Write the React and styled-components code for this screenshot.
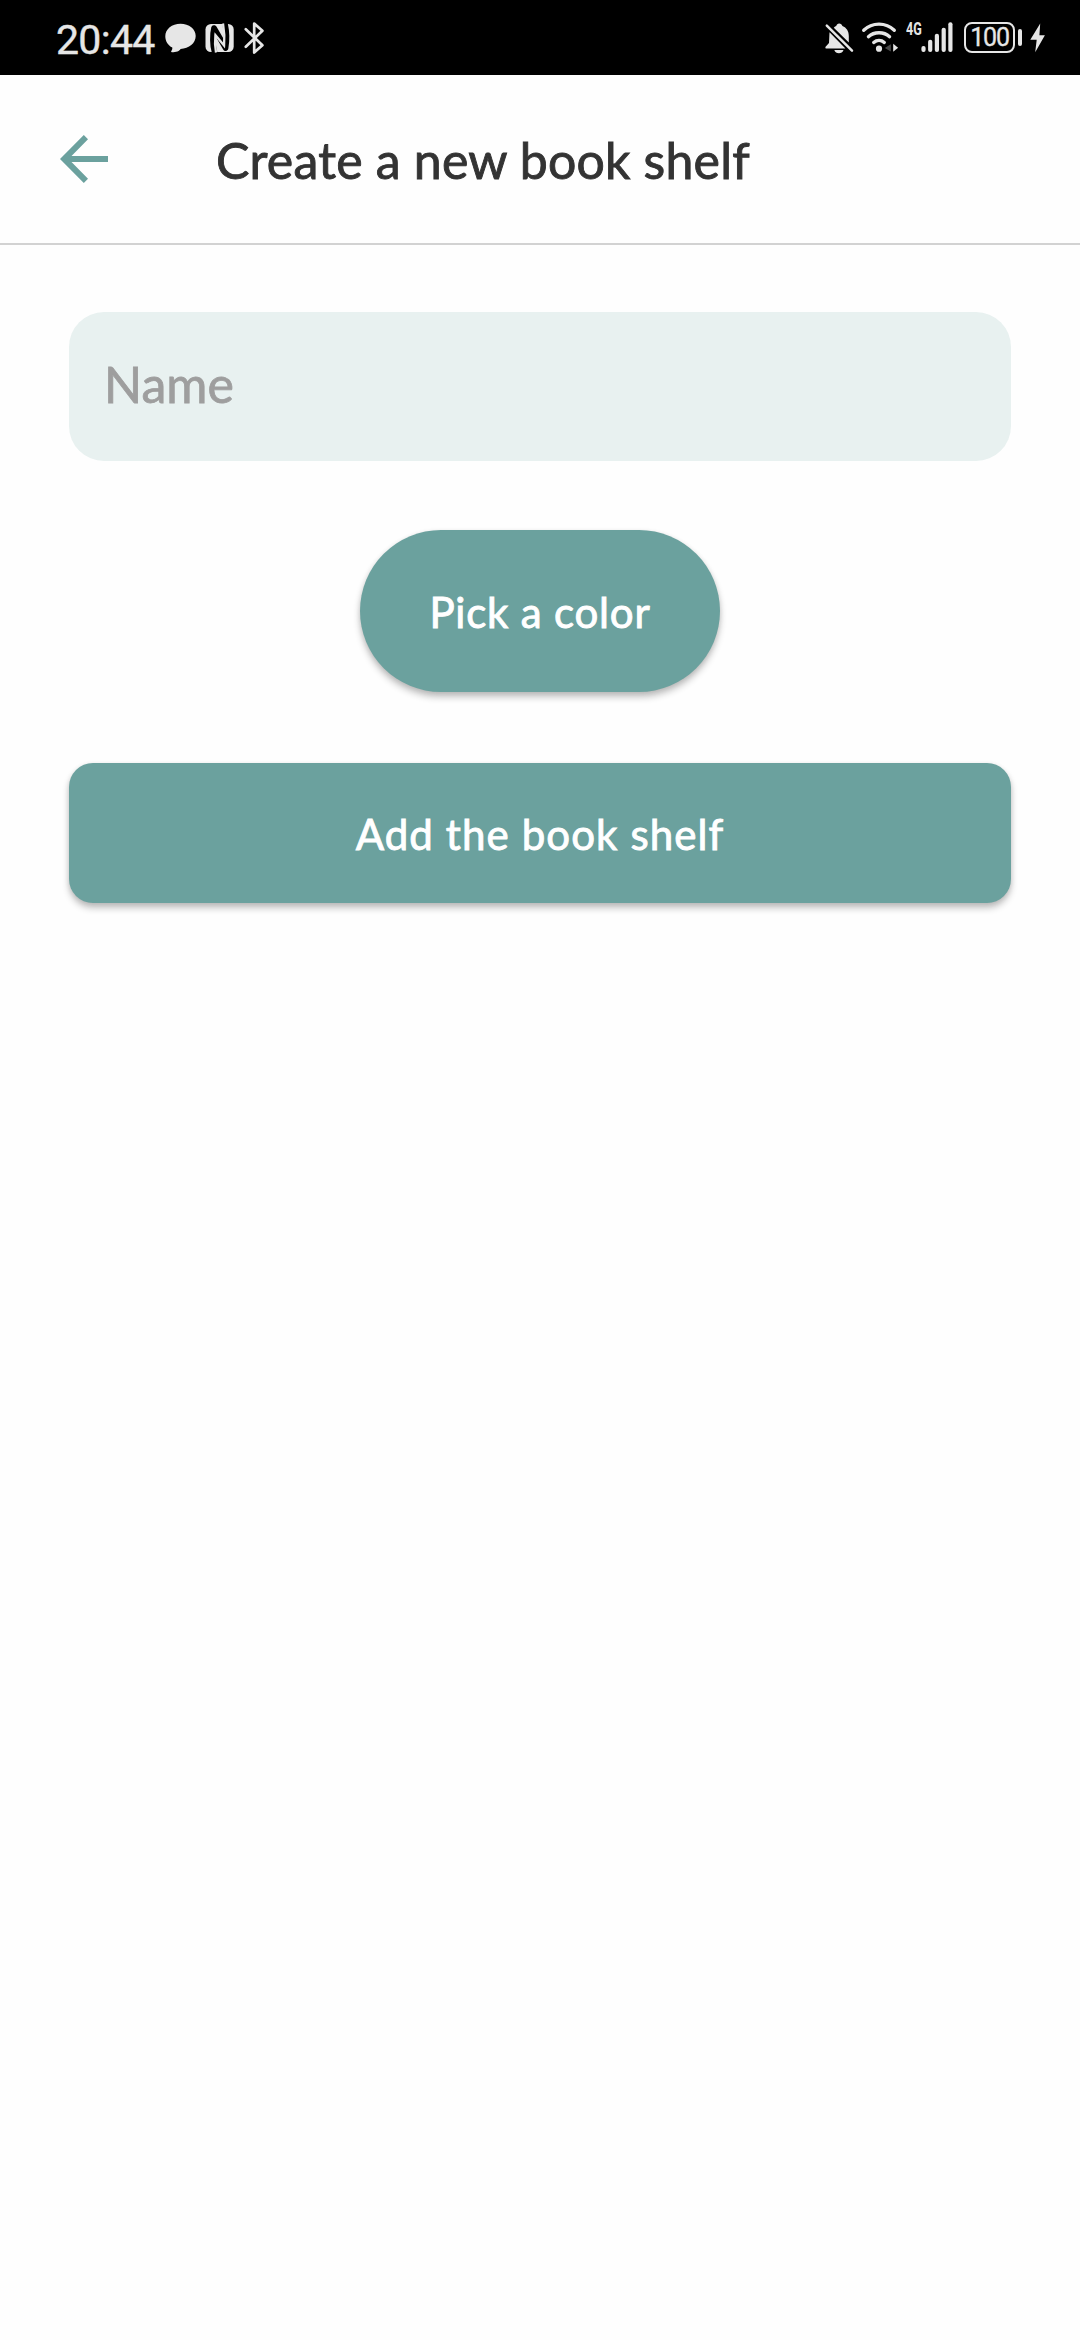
import React from 'react';
import styled, { createGlobalStyle } from 'styled-components';

const GlobalStyle = createGlobalStyle`
  *, *::before, *::after { box-sizing: border-box; }
  html, body { margin: 0; padding: 0; background: #fefefe; }
  button, input { font: inherit; border: 0; margin: 0; }
`;

const Screen = styled.div`
  display: flex;
  flex-direction: column;
  width: 1080px;
  height: 2340px;
  overflow: hidden;
  background: #fefefe;
  font-family: Lato, 'Liberation Sans', sans-serif;
`;

const StatusBar = styled.div`
  flex: none;
  display: flex;
  justify-content: space-between;
  height: 75px;
  padding: 0 33px 0 56px;
  background: #000;
  color: #e6e6e6;
  font-family: Roboto, sans-serif;
`;

const StatusGroup = styled.div`
  display: flex;
  align-items: center;
  height: 75px;
`;

const Clock = styled.span`
  width: 108px;
  padding-top: 4px;
  font-size: 41px;
  line-height: 48px;
  letter-spacing: -0.7px;
  -webkit-text-stroke: 0.4px #e6e6e6;
  white-space: nowrap;
`;

const Glyph = styled.svg`
  display: block;
  flex: none;
  height: 75px;
  fill: #e6e6e6;
  stroke: none;
  overflow: visible;
`;

const Network = styled.span`
  width: 15px;
  margin: 0 0 18px 7px;
  font-size: 19px;
  line-height: 20px;
  font-weight: 700;
  white-space: nowrap;
  transform: scaleX(0.66);
  transform-origin: left center;
`;

const Battery = styled.span`
  display: flex;
  align-items: center;
  justify-content: center;
  width: 51px;
  height: 31px;
  margin-left: 10px;
  padding-top: 1px;
  border: 2.6px solid #e6e6e6;
  border-radius: 8px;
  font-size: 25px;
  line-height: 26px;
  letter-spacing: -1.2px;
  -webkit-text-stroke: 0.3px #e6e6e6;
`;

const BatteryTip = styled.span`
  width: 4px;
  height: 17px;
  margin: 0 8px 0 3px;
  border-radius: 2px;
  background: #e6e6e6;
`;

const Header = styled.header`
  flex: none;
  display: flex;
  align-items: center;
  height: 170px;
  padding-left: 60px;
  border-bottom: 2px solid #d2d2d2;
`;

const BackButton = styled.button`
  display: flex;
  width: 48px;
  height: 48px;
  padding: 0;
  background: none;
  margin-top: -1px;
`;

const Title = styled.h1`
  margin: 2px 0 0 108px;
  font-size: 50px;
  line-height: 60px;
  font-weight: 400;
  letter-spacing: 0.2px;
  color: #333;
  -webkit-text-stroke: 0.9px #333;
  white-space: nowrap;
`;

const Form = styled.main`
  display: flex;
  flex-direction: column;
  align-items: center;
  padding: 67px 69px 0;
`;

const NameInput = styled.input`
  width: 100%;
  height: 149px;
  padding: 0 35px 5px;
  border-radius: 35px;
  background: #e8f1f0;
  color: #333;
  font-size: 50px;
  outline: none;

  &::placeholder {
    color: #9e9e9e;
    opacity: 1;
    -webkit-text-stroke: 0.8px #9e9e9e;
  }
`;

const Button = styled.button`
  display: flex;
  align-items: center;
  justify-content: center;
  width: ${(p) => p.$width};
  height: ${(p) => p.$height};
  margin-top: ${(p) => p.$top};
  padding: 1px 0 0;
  border-radius: ${(p) => p.$radius};
  background: #6ba19e;
  box-shadow: 0 5px 7px rgba(0, 0, 0, 0.24), 0 1px 5px rgba(0, 0, 0, 0.08);
  color: #fff;
  font-size: 42px;
  font-weight: 400;
  line-height: 50px;
  letter-spacing: ${(p) => p.$tracking};
  -webkit-text-stroke: 0.9px #fff;
  white-space: nowrap;
`;

function Icon({ x, width, children }) {
  return (
    <Glyph width={width} height="75" viewBox={`${x} 0 ${width} 75`} aria-hidden="true">
      {children}
    </Glyph>
  );
}

const BARS = [
  [923.5, 46],
  [930.2, 39.7],
  [936.9, 33.7],
  [943.7, 27.7],
  [950.4, 22.3],
];

export default function App() {
  return (
    <Screen>
      <GlobalStyle />
      <StatusBar>
        <StatusGroup>
          <Clock>20:44</Clock>
          <Icon x={164} width={40}>
            <path d="M180.5 23.7c8.6 0 15.2 5.3 15.2 12.4s-6.6 12.8-15.2 12.8c-.6 2-4.6 3.3-8.6 3.3-.8 0-1-.5-.6-1.1.7-1 1.2-2.3 1-3.6-4.300-2.200-7-6.400-7-11.300 0-7.200 6.600-12.500 15.200-12.500z" />
          </Icon>
          <Icon x={204} width={40}>
            <rect x="205.5" y="24" width="28.2" height="28" rx="5.5" />
            <path d="M214.600 52.500c-2.200-7-2.200-18-.6-24.500l11.600 20c1.400-8 1-17-.6-24.500" fill="none" stroke="#000" strokeWidth="5.600" strokeLinejoin="round" />
            <path d="M216 52.500c-1.200-6-1.200-12-.6-17.500l8.700 10.500c.6-7 .2-14.500-1.100-22" fill="none" stroke="#e6e6e6" strokeWidth="2.300" />
          </Icon>
          <Icon x={244} width={22}>
            <path
              fill="none"
              stroke="#e6e6e6"
              strokeWidth="2.7"
              strokeLinecap="round"
              strokeLinejoin="round"
              d="M245.8 29.300l16.600 15.900-8.200 7.300v-29l8.200 7.300-16.600 15.900"
            />
          </Icon>
        </StatusGroup>

        <StatusGroup>
          <Icon x={825} width={37}>
            <path d="M829.5 32.3l15.900 16.200H826c-.8 0-.8-1.500-.2-2l3.200-3.500z" />
            <path d="M833.8 27.700c1-1 1.700-1.300 2.400-1.600.5-1.600 1.400-2.600 3-2.600s2.700 1 3.200 2.600c4.200 1.700 6.400 5.200 6.400 9.800v6.600z" />
            <path d="M834.3 50h9.200c-.7 2.200-2.500 3.300-4.600 3.300s-3.900-1.100-4.600-3.300z" />
            <path d="M826.8 25.700l25.200 25" fill="none" stroke="#e6e6e6" strokeWidth="2.5" strokeLinecap="round" />
          </Icon>
          <Icon x={862} width={37}>
            <g fill="none" stroke="#e6e6e6" strokeWidth="3.3" strokeLinecap="round">
              <path d="M863.7 30.300c8.400-8.200 22.200-8.200 30.600 0" />
              <path d="M868.4 36.700c5.700-5.300 15.500-5.300 21.200 0" />
              <path d="M873.7 42.500c3.100-2.700 7.500-2.700 10.600 0" />
            </g>
            <circle cx="879" cy="48.7" r="3.1" />
            <path d="M890.8 44.300v7.200l-6-3.600z" fill="#4a4a4a" />
            <path d="M893.2 43.800v8l4.900-4z" />
          </Icon>
          <Network>4G</Network>
          <Icon x={921} width={33}>
            {BARS.map(([cx, top]) => (
              <rect key={cx} x={cx - 2.1} y={top} width="4.2" height={52.1 - top} rx="2" />
            ))}
          </Icon>
          <Battery>100</Battery>
          <BatteryTip />
          <Icon x={1030} width={17}>
            <path d="M1040.2 23.500l-9.900 16.300h6.400l-1.500 12.500 9.700-17h-5.500z" />
          </Icon>
        </StatusGroup>
      </StatusBar>

      <Header>
        <BackButton aria-label="Back">
          <svg width="48" height="48" viewBox="0 0 48 48" aria-hidden="true">
            <path d="M48 21H11.500L28 4.200 23.800 0 0 24l23.800 24 4.200-4.200L11.500 27H48z" fill="#6ba19e" />
          </svg>
        </BackButton>
        <Title>Create a new book shelf</Title>
      </Header>

      <Form as="form" onSubmit={(e) => e.preventDefault()}>
        <NameInput placeholder="Name" aria-label="Name" />
        <Button type="button" $width="360px" $height="162px" $top="69px" $radius="81px" $tracking="0.8px">
          Pick a color
        </Button>
        <Button type="submit" $width="100%" $height="140px" $top="71px" $radius="24px" $tracking="1.1px">
          Add the book shelf
        </Button>
      </Form>
    </Screen>
  );
}
